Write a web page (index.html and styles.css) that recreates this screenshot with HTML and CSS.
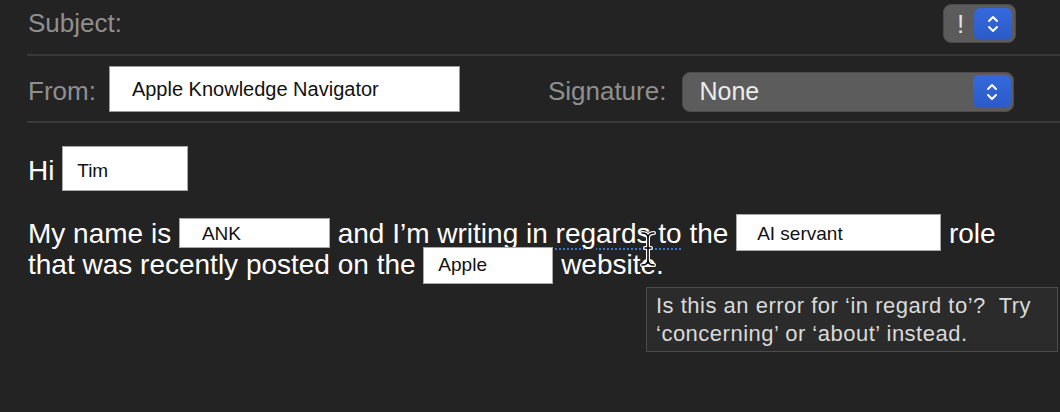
FILE: index.html
```html
<!DOCTYPE html>
<html lang="en">

<head>
    <meta charset="utf-8">
    <meta name="viewport" content="width=device-width, initial-scale=1.0">
    <title>New Message</title>
    <link rel="stylesheet" href="styles.css">
</head>

<body>
    <header class="felter">
        <div class="raekke emne">
            <span class="etiket">Subject:</span>
            <div class="prioritet">
                <span class="udraab">!</span>
                <span class="pil">
                    <svg width="14" height="22" viewBox="0 0 14 22"><path d="M3 8 L7 4 L11 8 M3 14 L7 18 L11 14" fill="none" stroke="#fff" stroke-width="2" stroke-linecap="round" stroke-linejoin="round"/></svg>
                </span>
            </div>
        </div>
        <div class="raekke fra">
            <span class="etiket">From:</span>
            <div class="felt">Apple Knowledge Navigator</div>
            <span class="etiket sig">Signature:</span>
            <div class="vaelger">
                <span>None</span>
                <span class="pil">
                    <svg width="14" height="22" viewBox="0 0 14 22"><path d="M3 8 L7 4 L11 8 M3 14 L7 18 L11 14" fill="none" stroke="#fff" stroke-width="2" stroke-linecap="round" stroke-linejoin="round"/></svg>
                </span>
            </div>
        </div>
    </header>

    <main class="brev">
        <p>Hi <span class="boks tim">Tim</span></p>
        <p>My name is <span class="boks ank">ANK</span> and I’m writing in <span class="fejl">regards to</span> the <span class="boks ai">AI servant</span> role that was recently posted on the <span class="boks apple">Apple</span> website.</p>

        <svg class="markoer" width="16" height="38" viewBox="0 0 16 38">
            <path d="M2 3 Q8 3 8 8 Q8 3 14 3 M8 8 L8 30 M5 18 L11 18 M2 35 Q8 35 8 30 Q8 35 14 35" fill="none" stroke="#fff" stroke-width="4" stroke-linecap="round"/>
            <path d="M2 3 Q8 3 8 8 Q8 3 14 3 M8 8 L8 30 M5 18 L11 18 M2 35 Q8 35 8 30 Q8 35 14 35" fill="none" stroke="#000" stroke-width="1.6" stroke-linecap="round"/>
        </svg>

        <div class="tip">Is this an error for ‘in regard to’?&nbsp; Try<br>‘concerning’ or ‘about’ instead.</div>
    </main>
</body>

</html>
```

FILE: styles.css
```css
body {
    margin: 0;
    background-color: #232323;
    font-family: "Liberation Sans", Arial, sans-serif;
    width: 1060px;
    height: 412px;
    overflow: hidden;
}

.raekke {
    display: flex;
    align-items: center;
    margin-left: 27px;
    padding-right: 44px;
    padding-left: 1px;
    border-bottom: 2px solid #393939;
}

.emne {
    height: 54px;
}

.fra {
    height: 65px;
}

.etiket {
    color: #8f8f8f;
    font-size: 26px;
}

.emne .etiket {
    margin-top: -7px;
}

.fra .etiket {
    margin-top: 5px;
}

.prioritet {
    margin-left: auto;
    align-self: flex-start;
    margin-top: 4px;
    width: 73px;
    height: 39px;
    box-sizing: border-box;
    background-color: #5b5b5b;
    border: 1px solid #4a4a4a;
    border-radius: 8px;
    display: flex;
    align-items: center;
    justify-content: space-between;
    padding: 0 3px 0 13px;
}

.udraab {
    color: #e0e0e0;
    font-size: 26px;
    line-height: 26px;
}

.pil {
    width: 38px;
    height: 32px;
    border-radius: 6px;
    background: linear-gradient(#3569dc, #2c5bc8);
    display: flex;
    align-items: center;
    justify-content: center;
}

.felt {
    margin-left: 13px;
    width: 351px;
    height: 46px;
    box-sizing: border-box;
    background-color: #fff;
    border: 1px solid #9a9a9a;
    padding-left: 22px;
    font-size: 20px;
    line-height: 44px;
    color: #111;
}

.sig {
    margin-left: 88px;
}

.vaelger {
    margin-left: 16px;
    margin-top: 6px;
    width: 332px;
    height: 40px;
    box-sizing: border-box;
    background-color: #5c5c5c;
    border: 1px solid #4c4c4c;
    border-radius: 8px;
    display: flex;
    align-items: center;
    justify-content: space-between;
    padding: 0 2px 0 16px;
    color: #ececec;
    font-size: 25px;
}

.vaelger .pil {
    height: 33px;
}

.brev {
    position: relative;
    padding-left: 28px;
    padding-top: 32px;
    color: #fff;
    font-size: 28px;
    line-height: 31px;
}

.brev p {
    margin: 0 0 32px 0;
    width: 1000px;
}

.boks {
    display: inline-block;
    background-color: #fff;
    border: 1px solid #a8a8a8;
    box-sizing: border-box;
    color: #111;
    font-size: 19px;
    line-height: 20px;
    vertical-align: 3px;
    margin-top: -30px;
    margin-bottom: -30px;
}

.tim {
    width: 126px;
    padding: 14px 0 9px 14px;
}

.ank {
    width: 151px;
    padding: 5px 0 3px 22px;
}

.ai {
    width: 205px;
    padding: 9px 0 6px 20px;
}

.apple {
    width: 130px;
    padding: 7px 0 8px 14px;
}

.fejl {
    text-decoration: underline dotted #3f74cf;
    text-decoration-thickness: 2px;
    text-underline-offset: 5px;
}

.markoer {
    position: absolute;
    left: 640px;
    top: 107px;
}

.tip {
    position: absolute;
    left: 646px;
    top: 164px;
    width: 412px;
    height: 65px;
    box-sizing: border-box;
    background-color: #2b2b2b;
    border: 1px solid #4b4b4b;
    padding: 4px 0 0 9px;
    color: #dadada;
    font-size: 22px;
    letter-spacing: 0.5px;
    line-height: 28px;
}
```
